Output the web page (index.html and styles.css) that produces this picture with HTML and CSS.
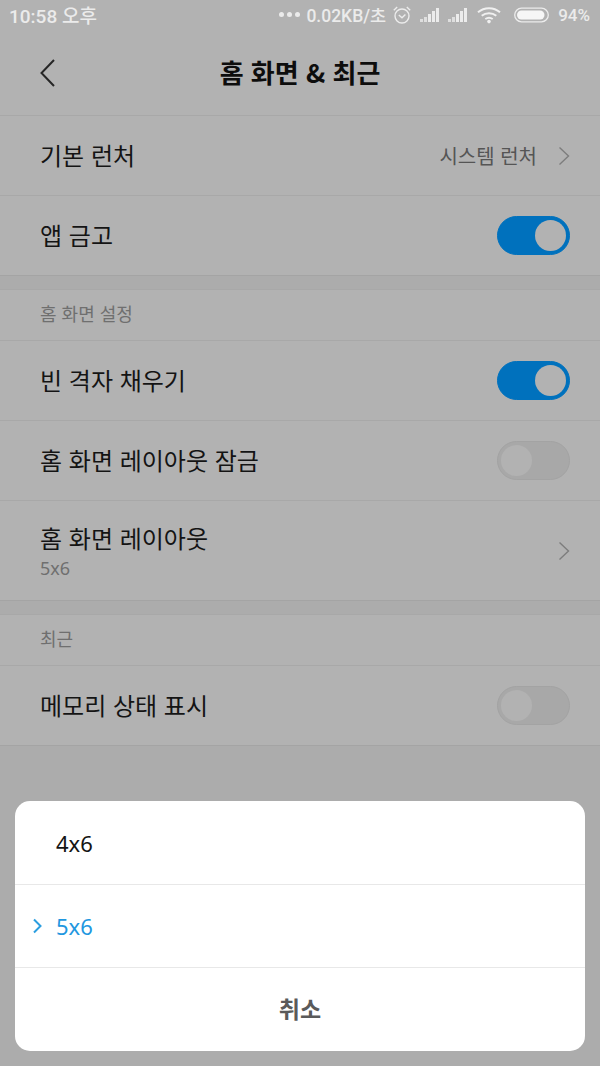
FILE: index.html
```html
<!DOCTYPE html>
<html lang="ko">
<head>
<meta charset="utf-8">
<title>홈 화면 &amp; 최근</title>
<link rel="stylesheet" href="styles.css">
</head>
<body>
<div class="screen">
  <div class="status">
    <span class="time">10:58 오후</span>
    <div class="status-right">
      <span class="dots"><i></i><i></i><i></i></span>
      <span class="speed">0.02KB/초</span>
      <svg class="ic-alarm" width="20" height="20" viewBox="0 0 20 20" fill="none" stroke="#ececec" stroke-width="1.4"><circle cx="10" cy="11" r="7"/><path d="M1.8 5.2 5.2 2M18.200 5.200 14.800 2M6.800 10 10 12.800 13.400 9.400"/></svg>
      <svg class="ic-signal" width="19" height="16" viewBox="0 0 19 16" fill="#ececec"><rect x="0" y="12" width="3" height="3" opacity=".75"/><rect x="4" y="10" width="3" height="5" opacity=".75"/><rect x="8" y="7" width="3" height="8"/><rect x="12" y="4" width="3" height="11"/><rect x="16" y="1" width="3" height="14"/></svg>
      <svg class="ic-signal" width="19" height="16" viewBox="0 0 19 16" fill="#ececec"><rect x="0" y="12" width="3" height="3" opacity=".75"/><rect x="4" y="10" width="3" height="5" opacity=".75"/><rect x="8" y="7" width="3" height="8"/><rect x="12" y="4" width="3" height="11"/><rect x="16" y="1" width="3" height="14"/></svg>
      <svg class="ic-wifi" width="24" height="18" viewBox="0 0 24 18" fill="none" stroke="#f0f0f0" stroke-width="2"><path d="M1 6.200C7.300.8 16.700.8 23 6.200M4.700 9.800C8.900 6.300 15.100 6.300 19.300 9.800M8.300 13C10.400 11.500 13.600 11.500 15.700 13"/><circle cx="12" cy="15.600" r="1.800" fill="#f0f0f0" stroke="none"/></svg>
      <svg class="ic-batt" width="35" height="16" viewBox="0 0 35 16"><rect x=".7" y="1.200" width="33.600" height="13.600" rx="6.800" fill="none" stroke="#ececec" stroke-width="1.300"/><rect x="3" y="3.500" width="27.500" height="9" rx="4.500" fill="#f6f6f6"/></svg>
      <span class="pct">94%</span>
    </div>
  </div>

  <header class="appbar">
    <svg class="back" width="18" height="30" viewBox="0 0 18 30" fill="none" stroke="#262626" stroke-width="2"><path d="M15 2 2.500 15 15 28"/></svg>
    <h1>홈 화면 &amp; 최근</h1>
  </header>

  <section class="group first">
    <div class="row"><span class="title">기본 런처</span>
      <span class="trail"><span class="value">시스템 런처</span><svg class="chev" width="12" height="20" viewBox="0 0 12 20" fill="none" stroke="#7d7d7d" stroke-width="1.400"><path d="M1.500 1.500 10.500 10 1.500 18.500"/></svg></span></div>
    <div class="row"><span class="title">앱 금고</span><span class="toggle on"></span></div>
  </section>

  <section class="group">
    <div class="label">홈 화면 설정</div>
    <div class="row"><span class="title">빈 격자 채우기</span><span class="toggle on"></span></div>
    <div class="row"><span class="title">홈 화면 레이아웃 잠금</span><span class="toggle"></span></div>
    <div class="row tall"><span class="stack"><span class="title">홈 화면 레이아웃</span><span class="sub">5x6</span></span>
      <svg class="chev" width="12" height="20" viewBox="0 0 12 20" fill="none" stroke="#7d7d7d" stroke-width="1.400"><path d="M1.500 1.500 10.500 10 1.500 18.500"/></svg></div>
  </section>

  <section class="group">
    <div class="label">최근</div>
    <div class="row"><span class="title">메모리 상태 표시</span><span class="toggle"></span></div>
  </section>

  <div class="rest"></div>

  <div class="sheet">
    <div class="opt"><span class="opt-text">4x6</span></div>
    <div class="opt selected"><svg class="tick" width="11" height="16" viewBox="0 0 11 16" fill="none" stroke="#2b9ee0" stroke-width="2"><path d="M2 1.500 8.500 8 2 14.500"/></svg><span class="opt-text">5x6</span></div>
    <div class="opt cancel">취소</div>
  </div>
</div>
</body>
</html>
```

FILE: styles.css
```css
* { box-sizing: border-box; }
html, body { margin: 0; padding: 0; }
body {
  width: 600px;
  height: 1066px;
  overflow: hidden;
  background: #ababab;
  font-family: "Noto Sans CJK KR", "Noto Sans", sans-serif;
}
.screen {
  position: relative;
  width: 600px;
  height: 1066px;
  display: flex;
  flex-direction: column;
  background: #acacac;
}
.status {
  height: 32px;
  flex: none;
  display: flex;
  justify-content: space-between;
  align-items: center;
  padding: 0 10px 3px 9px;
  background: #b2b2b2;
  color: #ebebeb;
  font-weight: 500;
}
.time { font-size: 19px; font-family: Roboto, "Noto Sans CJK KR", sans-serif; }
.status-right {
  display: flex;
  align-items: center;
  font-family: Roboto, "Noto Sans CJK KR", sans-serif;
  font-size: 17.5px;
}
.dots { display: flex; gap: 3px; margin-right: 6px; }
.dots i { width: 5px; height: 5px; border-radius: 50%; background: #ebebeb; }
.speed { margin-right: 6px; }
.ic-alarm { margin-right: 8px; }
.ic-signal { margin-right: 9px; }
.ic-wifi { margin-left: 1px; margin-right: 13px; }
.ic-batt { margin-right: 9px; }
.pct { font-size: 17px; }
.appbar {
  flex: none;
  position: relative;
  height: 84px;
  display: flex;
  align-items: center;
  justify-content: center;
  background: #b2b2b2;
  border-bottom: 1px solid #a8a8a8;
  padding-bottom: 5px;
}
.appbar h1 {
  margin: 0;
  font-size: 26px;
  font-weight: 700;
  color: #0d0d0d;
}
.back { position: absolute; left: 39px; top: 26px; }
.group {
  flex: none;
  background: #b2b2b2;
  margin-top: 13px;
  border-top: 1px solid #a8a8a8;
}
.group.first { margin-top: 0; border-top: 0; }
.label {
  height: 51px;
  padding: 0 40px 5px;
  display: flex;
  align-items: center;
  font-size: 18px;
  color: #6f6f6f;
  border-bottom: 1px solid #a8a8a8;
}
.row {
  height: 80px;
  padding: 0 30px 0 40px;
  display: flex;
  align-items: center;
  justify-content: space-between;
  border-bottom: 1px solid #a8a8a8;
}
.row:last-child { border-bottom-color: #a4a4a4; }
.row.tall { height: 100px; }
.title {
  font-size: 24px;
  color: #141414;
  margin-bottom: 2px;
}
.stack { display: flex; flex-direction: column; margin-top: -2px; }
.stack .title { line-height: 36px; margin-bottom: 0; }
.sub { font-size: 18px; line-height: 24px; color: #6f6f6f; font-family: "Noto Sans", sans-serif; }
.trail { display: flex; align-items: center; gap: 21px; }
.value { font-size: 20px; color: #555; }
.chev { flex: none; }
.toggle {
  position: relative;
  width: 73px;
  height: 39px;
  border-radius: 20px;
  background: #a8a8a8;
  border: 1px solid #a3a3a3;
}
.toggle::after {
  content: "";
  position: absolute;
  left: 3px;
  top: 3px;
  width: 31px;
  height: 31px;
  border-radius: 50%;
  background: #b2b2b2;
}
.toggle.on { background: #0071bd; border-color: #0071bd; }
.toggle.on::after { left: auto; right: 3px; }
.rest { flex: 1; }
.sheet {
  position: absolute;
  left: 15px;
  top: 801px;
  width: 570px;
  height: 250px;
  display: flex;
  flex-direction: column;
  border-radius: 15px;
  background: #fff;
  overflow: hidden;
}
.opt {
  position: relative;
  flex: none;
  height: 84px;
  padding-left: 41px;
  display: flex;
  align-items: center;
  font-size: 22px;
  color: #141414;
  border-bottom: 1px solid #e8e8e8;
  font-family: "Noto Sans", sans-serif;
}
.tick { position: absolute; left: 17px; top: 33px; }
.selected { height: 83px; color: #1f97e0; }
.cancel {
  flex: 1;
  height: auto;
  padding: 0 0 3px;
  justify-content: center;
  border-bottom: 0;
  font-size: 23px;
  font-weight: 700;
  color: #5a5a5a;
  font-family: "Noto Sans CJK KR", sans-serif;
}
```
